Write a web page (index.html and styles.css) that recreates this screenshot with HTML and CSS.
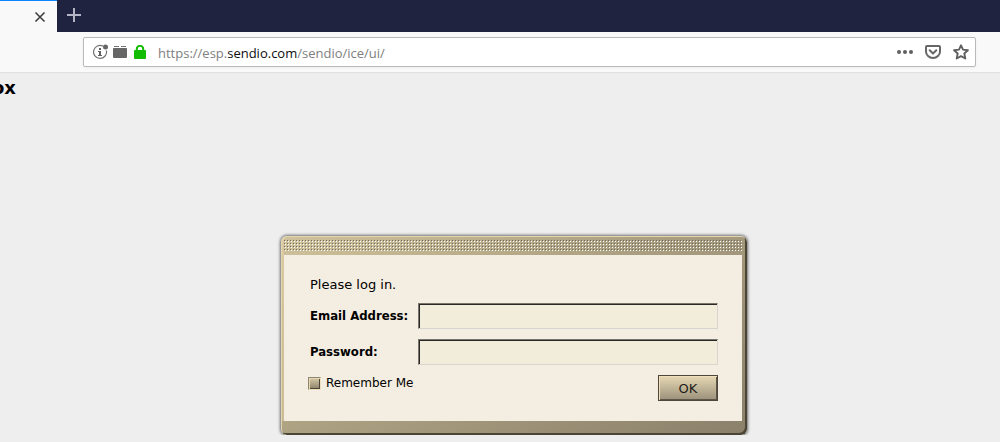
FILE: index.html
```html
<!DOCTYPE html>
<html lang="en">
<head>
<meta charset="utf-8">
<title>Log in</title>
<link rel="stylesheet" href="styles.css">
</head>
<body>
<header class="browser">
  <div class="tabs">
    <div class="tab">
      <button class="icon-button" type="button" aria-label="Close tab">
        <svg width="12" height="12" viewBox="0 0 12 12"><path d="M1.5 1.5l9 9M10.5 1.5l-9 9" stroke="#3f3f41" stroke-width="1.6" fill="none"/></svg>
      </button>
    </div>
    <button class="icon-button new-tab" type="button" aria-label="New tab">
      <svg width="14" height="14" viewBox="0 0 14 14"><path d="M7 0v14M0 7h14" stroke="#b4b5c4" stroke-width="2" fill="none"/></svg>
    </button>
  </div>
  <div class="toolbar">
    <div class="address">
      <div class="site-icons">
        <svg width="16" height="16" viewBox="0 0 16 16"><path d="M10 2.100A6.500 6.500 0 1 0 13.400 6.500" fill="none" stroke="#737373" stroke-width="1.200"/><circle cx="12.500" cy="3" r="2.500" fill="#666"/><path d="M6 4h2v2H6zM5 7h3v4h1v1H5v-1h1V8H5z" fill="#606060"/></svg>
        <svg width="14" height="14" viewBox="0 0 14 14"><path d="M1 1h5v1H1zM8 1h5v1H8z" fill="#747474"/><rect y="3" width="14" height="10" rx="1" fill="#666"/></svg>
        <svg class="lock" width="12" height="14" viewBox="0 0 12 14"><path d="M2.800 7V4a3.200 3.200 0 0 1 6.400 0v3" fill="none" stroke="#12bc00" stroke-width="2"/><rect y="5" width="12" height="9" rx="1" fill="#12bc00"/></svg>
      </div>
      <div class="url">https://esp.<span class="domain">sendio.com</span>/sendio/ice/ui/</div>
      <button class="icon-button" type="button" aria-label="Page actions">
        <svg width="16" height="16" viewBox="0 0 16 16" fill="#606060"><circle cx="2" cy="8" r="2"/><circle cx="8" cy="8" r="2"/><circle cx="14" cy="8" r="2"/></svg>
      </button>
      <button class="icon-button" type="button" aria-label="Save to Pocket">
        <svg width="16" height="16" viewBox="0 0 16 16" fill="none" stroke="#666" stroke-width="2" stroke-linecap="round" stroke-linejoin="round"><path d="M2 2h12a1 1 0 0 1 1 1v4.500a7 6.500 0 0 1-14 0V3a1 1 0 0 1 1-1z"/><path d="M4.700 6.300L8 9.400l3.300-3.100"/></svg>
      </button>
      <button class="icon-button" type="button" aria-label="Bookmark this page">
        <svg width="16" height="16" viewBox="0 0 16 16" fill="none" stroke="#606060" stroke-width="1.900" stroke-linejoin="round"><path d="M8 1.300l2 4.300 4.900.600-3.600 3.300 1 5L8 12.100l-4.300 2.400 1-5L1.100 6.200 6 5.600z"/></svg>
      </button>
    </div>
  </div>
</header>
<main class="page">
  <h1 class="heading">ox</h1>
  <div class="stage">
    <form class="dialog">
      <div class="grip"></div>
      <div class="body">
        <p class="prompt">Please log in.</p>
        <div class="row">
          <label class="label" for="email">Email Address:</label>
          <input class="field" id="email" type="text">
        </div>
        <div class="row">
          <label class="label" for="password">Password:</label>
          <input class="field" id="password" type="password">
        </div>
        <div class="actions">
          <label class="remember"><input class="check" type="checkbox">Remember Me</label>
          <button class="ok" type="submit">OK</button>
        </div>
      </div>
    </form>
  </div>
</main>
</body>
</html>
```
FILE: styles.css
```css
* { box-sizing: border-box; }
body {
  margin: 0;
  background: #eee;
  color: #000;
  font: 13px/16px Verdana, "DejaVu Sans", sans-serif;
  overflow: hidden;
}
svg { display: block; flex: none; }
.icon-button {
  padding: 0;
  border: 0;
  background: none;
}
.tabs {
  display: flex;
  height: 32px;
  background: #202340;
}
.tab {
  display: flex;
  align-items: center;
  justify-content: flex-end;
  width: 57px;
  padding-right: 11px;
  border-top: 1px solid #0a84ff;
  background: #f9f9fa;
}
.new-tab { padding: 0 10px 2px; }
.toolbar {
  padding: 5px 24px 5px 83px;
  border-bottom: 1px solid #e0e0e1;
  background: #f9f9fa;
}
.address {
  display: flex;
  align-items: center;
  gap: 12px;
  height: 30px;
  padding: 0 6px 0 9px;
  border: 1px solid #b9b9ba;
  border-radius: 2px;
  background: #fff;
  box-shadow: 0 1px 3px #0000000d;
}
.site-icons {
  display: flex;
  align-items: center;
  gap: 4px;
}
.lock { margin-left: 3px; }
.url {
  flex: 1;
  color: #808080;
  font: 13px/18px "Segoe UI", "Open Sans", sans-serif;
  padding-top: 1px;
}
.domain { color: #0c0c0d; }
.page { padding-top: 6px; }
.heading {
  margin: 0 0 0 -8px;
  font: bold 18px/18px Verdana, "DejaVu Sans", sans-serif;
}
.stage {
  display: flex;
  justify-content: center;
  padding: 139px 0 0 28px;
}
.dialog {
  width: 466px;
  padding: 0 5px 14px 3px;
  border-radius: 6px;
  background:
    linear-gradient(#d9caa2, #c9bb94) 0 0 / 3px calc(100% - 14px) no-repeat,
    linear-gradient(150deg, #d0c29b, #aba081 45%, #8b816b);
  box-shadow: inset 1px 1px #e4d5ae, inset -2px -2px #4b4536, 0 0 3px 1px #0000008c;
}
.grip {
  height: 19px;
  padding: 4px 0;
}
.grip::before {
  content: "";
  display: block;
  height: 12px;
  background:
    conic-gradient(from 270deg at 1px 1px, #706b60 25%, transparent 0) 0 0 / 3px 3px,
    conic-gradient(from 270deg at 1px 1px, #fff 25%, transparent 0) 1px 1px / 3px 3px;
}
.body {
  padding: 22px 24px 20px 26px;
  background: #f4ede1;
}
.prompt { margin: 0 0 10px; }
.row {
  display: flex;
  align-items: center;
  margin-bottom: 10px;
}
.label {
  width: 108px;
  font: bold 13px/16px "DejaVu Sans Condensed", Verdana, sans-serif;
}
.field {
  flex: 1;
  min-width: 0;
  height: 26px;
  padding: 2px 4px;
  border: 1px solid;
  border-color: #78756d #d6d5cf #d6d5cf #78756d;
  border-radius: 0;
  background: #f2edda;
  box-shadow: inset 1px 1px #292827;
  outline: 0;
  font: inherit;
}
.actions {
  display: flex;
  align-items: flex-start;
  justify-content: space-between;
}
.remember {
  display: flex;
  align-items: center;
  gap: 5px;
  margin-left: -2px;
  font-size: 12px;
}
.check {
  appearance: none;
  width: 13px;
  height: 13px;
  margin: 0;
  border: 1px solid;
  border-color: #8c8571 #ece0bd #ece0bd #8c8571;
  background: linear-gradient(#d5c9a8, #8c8169);
  box-shadow: inset 1px 1px #e9d9af, inset -1px -1px #4b4537;
}
.ok {
  width: 60px;
  height: 26px;
  padding: 1px 0 0;
  border: 1px solid #4c463b;
  border-radius: 0;
  background: linear-gradient(#e6d8b4, #9b907b);
  box-shadow: inset 1px 1px #f0dfb9, inset -1px -1px #5e5747;
  color: #1d1c18;
  font: 13px/16px Verdana, "DejaVu Sans", sans-serif;
}
```
